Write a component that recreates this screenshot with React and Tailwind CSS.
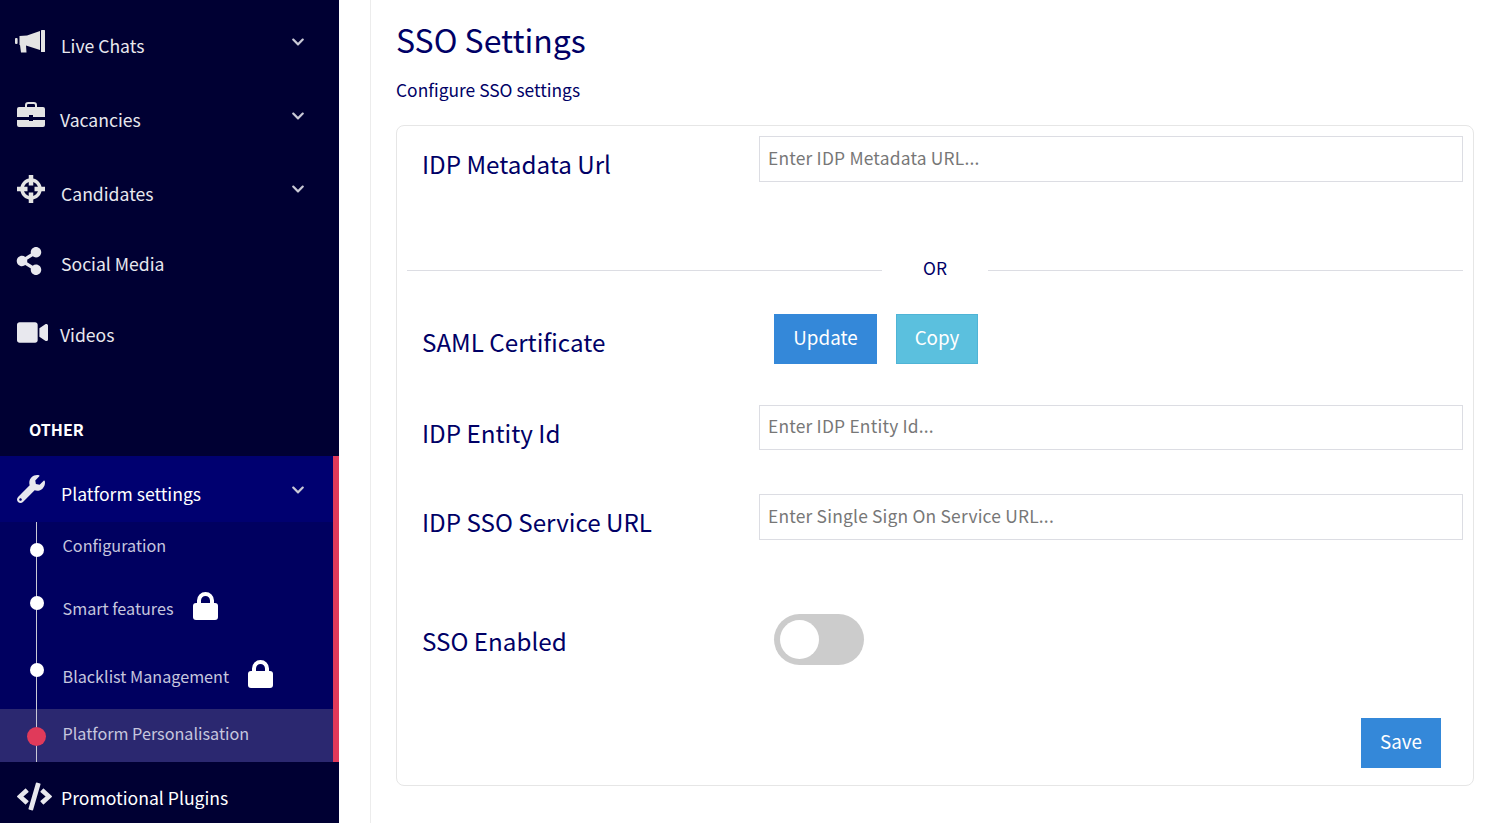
import React from "react";
import { FaShareAlt, FaVideo, FaWrench, FaCode, FaChevronDown } from "react-icons/fa";

const font = { fontFamily: '"Noto Sans CJK SC", "Noto Sans", sans-serif' };

function Bullhorn({ className }) {
  return (
    <svg width="31" height="25" viewBox="0 0 31 25" fill="#e4e4e4" className={className}>
      <rect x="1" y="9" width="2.6" height="6" rx="1" />
      <polygon points="5.5,7 13,6.5 26,2 26,21 12,16.5 12.5,23.5 7,23.5 6,16 5.5,16" />
      <rect x="27" y="1" width="4" height="22" rx="0.5" />
    </svg>
  );
}

function Briefcase({ className }) {
  return (
    <svg width="28" height="25" viewBox="0 0 28 25" fill="#e4e4e4" className={className}>
      <path d="M9 6V3.2C9 2 10 1 11.2 1h5.6C18 1 19 2 19 3.2V6" fill="none" stroke="#e4e4e4" strokeWidth="2" />
      <path d="M2 5h24a2 2 0 0 1 2 2v8H16v-2h-4v2H0V7a2 2 0 0 1 2-2z" />
      <path d="M0 18h12v1h4v-1h12v5a2 2 0 0 1-2 2H2a2 2 0 0 1-2-2z" />
    </svg>
  );
}

function Crosshair({ className }) {
  return (
    <svg width="28" height="28" viewBox="0 0 28 28" fill="#e4e4e4" className={className}>
      <circle cx="14" cy="14" r="9" fill="none" stroke="#e4e4e4" strokeWidth="3.5" />
      <rect x="11.75" y="0" width="4.5" height="10.5" />
      <rect x="11.75" y="17.5" width="4.5" height="10.5" />
      <rect x="0" y="11.75" width="10.5" height="4.5" />
      <rect x="17.5" y="11.75" width="10.5" height="4.5" />
    </svg>
  );
}

function Lock({ className }) {
  return (
    <svg width="25" height="28" viewBox="0 0 25 28" fill="#ffffff" className={className}>
      <path d="M6 12V8.5a6.5 6.5 0 0 1 13 0V12" fill="none" stroke="#ffffff" strokeWidth="4" />
      <rect x="0" y="11" width="25" height="17" rx="3" />
    </svg>
  );
}

function NavRow({ icon: Icon, label, chevron, h, iconClass, textClass, chevClass, pr }) {
  return (
    <div className={`flex items-center ${h} pl-[17px] ${pr || "pr-[34px]"} text-[#e8e8ee]`}>
      <div className="w-[44px] shrink-0"><Icon className={iconClass} /></div>
      <span className={`flex-1 text-[17.6px] leading-none ${textClass || ""}`}>{label}</span>
      {chevron && <FaChevronDown className={`text-[14px] text-[#c9c9d6] ${chevClass}`} />}
    </div>
  );
}

function SubRow({ label, h, pt, dot, lock, bg }) {
  return (
    <div className={`relative flex items-start pl-[62.5px] ${h} ${pt} ${bg || ""}`}>
      {dot}
      <span className="text-[16.2px] leading-[24px] text-[#c6c6de]">{label}</span>
      {lock && <Lock className="ml-[19px] mt-[-4px]" />}
    </div>
  );
}

function Field({ label, placeholder, rowClass, inputH }) {
  return (
    <div className={`flex items-start ${rowClass || ""}`}>
      <label className="w-[352px] shrink-0 pl-[15px] pt-[10px] text-[24.2px] leading-[36px] text-[#000066]">{label}</label>
      <input
        placeholder={placeholder}
        className={`${inputH || "h-[46px]"} flex-1 border border-[#dcdde3] bg-white px-2 pb-[4px] text-[17.4px] tracking-[0.2px] outline-none placeholder:text-[#777777]`}
      />
    </div>
  );
}

export default function App() {
  return (
    <div className="flex h-[823px] overflow-hidden bg-white" style={font}>
      <aside className="h-[823px] w-[339px] shrink-0 overflow-hidden bg-[#000033]">
        <div className="h-[9px]" />
        <NavRow icon={Bullhorn} label="Live Chats" chevron h="h-[74px]" iconClass="-ml-[3px] -translate-y-[5px]" chevClass="-translate-y-[4px]" />
        <NavRow icon={Briefcase} label="Vacancies" chevron h="h-[74px]" iconClass="-translate-y-[6px]" chevClass="-translate-y-[4px]" textClass="-translate-x-px" />
        <NavRow icon={Crosshair} label="Candidates" chevron h="h-[74px]" iconClass="-translate-y-[5px]" chevClass="-translate-y-[5px]" />
        <NavRow icon={(p) => <FaShareAlt {...p} />} label="Social Media" h="h-[68px]" iconClass="-ml-[2px] text-[28px] -translate-y-[4px]" textClass="-translate-y-px" />
        <NavRow icon={(p) => <FaVideo {...p} />} label="Videos" h="h-[73px]" iconClass="text-[31px] -translate-y-[3px]" textClass="-translate-x-px -translate-y-px" />
        <div className="h-[84px] pl-[29px] pt-[45px] text-[16px] font-bold leading-[24px] text-white">OTHER</div>

        <section className="relative h-[306px] w-[340px] border-r-[7px] border-[#e03a5a] bg-[#000060]">
          <div className="h-[66px] bg-[#000070]">
            <NavRow icon={(p) => <FaWrench {...p} />} label="Platform settings" chevron h="h-[66px]" pr="pr-[28px]" iconClass="text-[28px]" chevClass="translate-y-px" textClass="translate-y-[5px] text-white" />
          </div>
          <div className="absolute left-[36px] top-[66px] z-10 h-[240px] w-px bg-[#c9c9d6]" />
          <SubRow label="Configuration" h="h-[55px]" pt="pt-[11px]"
            dot={<i className="absolute left-[29.5px] top-[21px] z-20 h-[14px] w-[14px] rounded-full bg-white" />} />
          <SubRow label="Smart features" h="h-[66px]" pt="pt-[19px]" lock
            dot={<i className="absolute left-[29.5px] top-[19px] z-20 h-[14px] w-[14px] rounded-full bg-white" />} />
          <SubRow label="Blacklist Management" h="h-[66px]" pt="pt-[21px]" lock
            dot={<i className="absolute left-[29.5px] top-[20px] z-20 h-[14px] w-[14px] rounded-full bg-white" />} />
          <SubRow label="Platform Personalisation" h="h-[53px]" pt="pt-[12px]" bg="bg-[#2b2870]"
            dot={<i className="absolute left-[27px] top-[18px] z-20 h-[19px] w-[19px] rounded-full bg-[#e03a5a]" />} />
        </section>

        <NavRow icon={(p) => <FaCode {...p} />} label="Promotional Plugins" h="h-[72px]" iconClass="text-[35px] -translate-y-[2px]" textClass="text-white" />
      </aside>

      <main className="ml-[31px] flex-1 border-l border-[#ececec] pl-[25px] pr-[31px]">
        <h1 className="pt-[14px] text-[32px] font-normal leading-[50px] text-[#000066]">SSO Settings</h1>
        <p className="mt-[14px] text-[17.4px] leading-[24px] text-[#000066]">Configure SSO settings</p>
        <div className="mt-[23px] h-[661px] w-[1078px] rounded-lg border border-[#e6e6e6] px-[10px] pt-[10px]">
          <Field label="IDP Metadata Url" placeholder="Enter IDP Metadata URL..." />
          <div className="relative mt-[76px] flex h-[24px] items-center">
            <div className="h-px flex-1 bg-[#dcdde3]" />
            <span className="w-[106px] -translate-y-[2px] text-center text-[17.4px] leading-[24px] text-[#000066]">OR</span>
            <div className="h-px flex-1 bg-[#dcdde3]" />
          </div>
          <div className="mt-[32px] flex items-start">
            <label className="w-[367px] shrink-0 pl-[15px] pt-[10px] text-[24.2px] leading-[36px] text-[#000066]">SAML Certificate</label>
            <button className="h-[50px] w-[103px] bg-[#3488d9] pb-[3px] text-[18.8px] text-white">Update</button>
            <button className="ml-[19px] h-[50px] w-[82px] border border-[#4fb4d6] bg-[#5bc0de] pb-[3px] text-[18.8px] text-white">Copy</button>
          </div>
          <Field label="IDP Entity Id" placeholder="Enter IDP Entity Id..." rowClass="mt-[41px]" inputH="h-[45px]" />
          <Field label="IDP SSO Service URL" placeholder="Enter Single Sign On Service URL..." rowClass="mt-[43px]" />
          <div className="mt-[74px] flex items-start">
            <label className="w-[367px] shrink-0 pl-[15px] pt-[9px] text-[24.2px] leading-[36px] text-[#000066]">SSO Enabled</label>
            <div className="flex h-[51px] w-[90px] items-center rounded-full bg-[#cccccc] pl-[6px]">
              <div className="h-[39px] w-[39px] rounded-full bg-white" />
            </div>
          </div>
          <div className="mt-[53px] flex justify-end pr-[22px]">
            <button className="h-[50px] w-[80px] bg-[#3488d9] pb-[3px] text-[18.8px] text-white">Save</button>
          </div>
        </div>
      </main>
    </div>
  );
}
